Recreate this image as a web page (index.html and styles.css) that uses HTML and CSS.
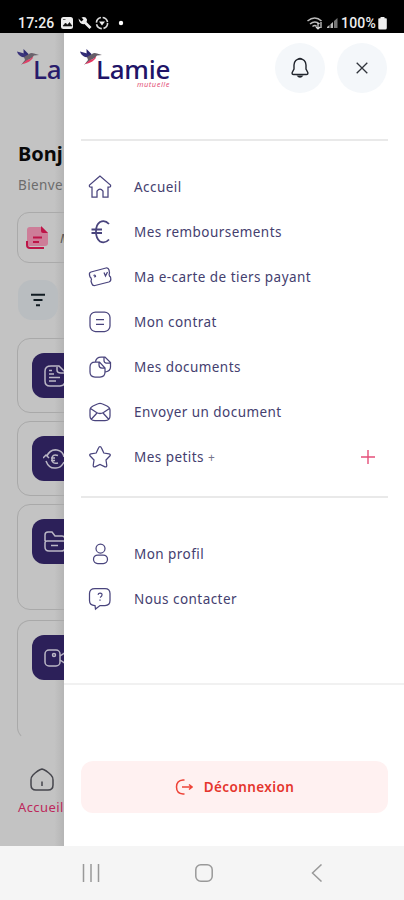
FILE: index.html
```html
<!DOCTYPE html>
<html lang="fr">
<head>
<meta charset="utf-8">
<title>Lamie mutuelle</title>
<link rel="stylesheet" href="styles.css">
</head>
<body>
<svg class="defs" width="0" height="0">
  <symbol id="bird" viewBox="0 0 22 17">
    <path d="M6.500 0L11.500 5L11 9L8 8Q6 5 6.500 0Z" fill="#29246f"/>
    <path d="M0 2.500L9 5L12 9L5 8Q1 6 0 2.500Z" fill="#332d77"/>
    <path d="M7 8L12 5Q14 3.500 17 4.500L22 6L17 6.500Q15 10 11 11L4 16L8 11Z" fill="#655d67"/>
    <path d="M16 7.500Q14 10 10 11L5 15Q11 14 14 11Q16 9.500 16 7.500Z" fill="#e43862"/>
  </symbol>
</svg>
<header class="status">
  <span class="time">17:26</span>
  <svg class="status-left" width="64" height="16" viewBox="0 0 64 16">
    <rect x="1" y="2" width="12" height="12" rx="2.500" fill="#eee"/><path d="M3 11l2.500-3 2 2 2-2.500 2.500 3.500zM3 4.500h2.500" fill="#111" stroke="#111" stroke-width=".6"/>
    <path d="M18.500 3.500l3 3 2-2-2-2q4-1.500 5.500 2 0 1.500-.5 2.500l5 5-2 2-5-5q-5 1-6-5.500z" fill="#eee"/>
    <circle cx="42" cy="8" r="5.600" fill="none" stroke="#ddd" stroke-width="1.600" stroke-dasharray="7 1.800"/><path d="M39 6.500h6L42 10.500z" fill="#eee"/>
    <circle cx="61" cy="8" r="2.200" fill="#fff"/>
  </svg>
  <svg class="status-right" width="34" height="14" viewBox="0 0 34 14">
    <path d="M1.500 5q7.500-6 14 0M4 8q5-4 9.500 0M6.500 10.500q2.500-2 4 0" fill="none" stroke="#bbb" stroke-width="1.600"/><path d="M12 13V7m-2 4l2 2 2-2M15 6v6" fill="none" stroke="#ddd" stroke-width="1.200"/>
    <path d="M21 12h2.500V9L21 11zM24.500 12H27V6l-2.500 2.300z" fill="#bbb"/><path d="M28 12h3.500V2L28 5z" fill="#777"/>
  </svg>
  <span class="level">100%</span>
  <svg width="9" height="13" viewBox="0 0 9 13"><path d="M2.500 0h4v1.200H8q.8 0 .8 1V11q0 1.500-1.500 1.500h-5.500Q.3 12.500.3 11V2.200q0-1 .8-1h1.400z" fill="#eee"/></svg>
</header>
<div class="stage">
  <section class="home">
    <div class="logo logo-dim"><svg class="bird" width="22" height="17"><use href="#bird"/></svg><span class="word">La</span></div>
    <h1>Bonj</h1>
    <p class="welcome">Bienve</p>
    <div class="search">
      <svg width="24" height="24" viewBox="0 0 24 24"><path d="M5 1h12l6 6v10q0 3-3 3H5q-3 0-3-3V4q0-3 3-3z" fill="#cd7d98"/><path d="M16 0l7 7h-5q-2 0-2-2z" fill="#bd1548"/><path d="M2 15v4q0 3 3 3h14" fill="none" stroke="#bd1548" stroke-width="2"/><path d="M8 11.500h9M8 16h6" stroke="#bd1548" stroke-width="2"/></svg>
      <em>M</em>
    </div>
    <div class="filter"><svg width="16" height="14" viewBox="0 0 16 14"><path d="M1 1.800h14M3.500 7h9M6 12.200h4" stroke="#111b22" stroke-width="2"/></svg></div>
    <div class="card"><div class="tile"><svg width="24" height="24" viewBox="0 0 24 24"><path d="M8 2h8l6 6v9q0 5-5 5H7q-5 0-5-5V7q0-5 6-5z"/><path d="M14 3v3q0 3 4 3h3M6 10h5M6 13.500h11M6 17h7M6 6.500h3"/></svg></div></div>
    <div class="card"><div class="tile"><svg width="24" height="24" viewBox="0 0 24 24"><path d="M4 9Q7 2 14 3q6 1 7 7M3 14q3 8 10 7 5 0 8-6M0 11l3-3 3 3M15 8.500q-6-2-6 3.500t6 4M8 11h4M8 13.500h4"/></svg></div></div>
    <div class="card tall"><div class="tile"><svg width="24" height="24" viewBox="0 0 24 24"><path d="M2 11V5q0-3 3-3h4l3 4h7q3 0 3 4v1M4 11h17q2 0 1 3v4q0 3-4 3H6q-4 0-4-4v-4q0-2 2-2zM8 15.500h7"/></svg></div></div>
    <div class="card last"><div class="tile"><svg width="24" height="24" viewBox="0 0 24 24"><rect x="2" y="4" width="15" height="16" rx="4"/><path d="M17 10l6-4v12l-6-4"/><circle cx="11" cy="9" r="1.500"/></svg></div></div>
    <div class="tab">
      <svg width="24" height="23" viewBox="0 0 24 23"><path d="M12 1Q8 2 3 7 1 9 1 12v5q0 5 5 5h12q5 0 5-5v-5q0-3-2-5Q16 2 12 1zM12 13.500v4.500" fill="none" stroke="#45454c" stroke-width="1.500"/></svg>
      <span>Accueil</span>
    </div>
  </section>
  <aside class="drawer">
    <div class="top">
      <div class="logo"><svg class="bird" width="22" height="17"><use href="#bird"/></svg><span class="word">Lamie</span><span class="sub">mutuelle</span></div>
      <button class="round" aria-label="Notifications"><svg width="20" height="22" viewBox="0 0 20 22"><path d="M10 2q5.500 0 6 6v4l1.800 3.500q.5 2-1.500 2H3.700q-2 0-1.500-2L4 12V8q.5-6 6-6z" fill="none" stroke="#20242c" stroke-width="1.400"/><path d="M7.500 2Q10-.5 12.500 2zM6.500 18.500q3.500 4.500 7 0z" fill="#20242c"/></svg></button>
      <button class="round" aria-label="Fermer"><svg width="12" height="12" viewBox="0 0 12 12"><path d="M.7.7l10.600 10.600M11.300.7L.7 11.300" stroke="#30343b" stroke-width="1.300"/></svg></button>
    </div>
    <nav class="menu">
      <a><svg viewBox="0 0 24 24"><path d="M12 1L1.500 10q-.7 2 1.500 2h1v10h5v-6q3-4 6 0v6h5V12h1q2.200 0 1.500-2z"/></svg><span>Accueil</span></a>
      <a><svg viewBox="0 0 24 24"><path d="M21 4Q17-.5 12 2 8 4.500 8 11.500T12 21.500Q17 24 21 19.500M3.500 9.500H14M3.500 13H14" stroke-width="1.800"/></svg><span>Mes remboursements</span></a>
      <a><svg viewBox="0 0 24 24"><path d="M3 7L18 3q2.300-.5 3 2l.5 3q-.8 1.500 0 3l1 1 .3 2q.2 2.300-2 3L7 20.500q-2.500.5-3.200-2L3 16q1-1.500 0-3L2 12l-.5-2Q1 7.500 3 7zM16 7.500l1.500 3.500 2-4M5.500 10.500q2-1 2 1l-1.500.5"/></svg><span>Ma e-carte de tiers payant</span></a>
      <a><svg viewBox="0 0 24 24"><rect x="2" y="2" width="20" height="19.500" rx="5.500"/><path d="M8 9.700h8M8 14.300h8"/></svg><span>Mon contrat</span></a>
      <a><svg viewBox="0 0 24 24"><path d="M7 7h4.500l5.500 6v4q0 5-5 5H7q-5 0-5-5v-5Q2 7 7 7zM11 7v3q0 3 3 3h3M7.500 6.500Q8.500 2 13 2h4l5.500 5.500V12q0 4-5 5M16 2v3.500q0 2.500 2.500 2.500h4"/></svg><span>Mes documents</span></a>
      <a><svg viewBox="0 0 24 24"><path d="M2 10Q2 7.500 5 6l5-2.200q2-1 4 0L19 6q3 1.500 3 4v6q0 4.500-5 4.500H7q-5 0-5-4.500zM2.500 8.500l6 4q3.500 2 7 0l6-4M3.500 19L9 13M20.500 19L15 13"/></svg><span>Envoyer un document</span></a>
      <a><svg viewBox="0 0 24 24"><path d="M12 1.700q1 0 1.500 1.200L15.800 8l5.300.8q2 .5.700 2.200L18 15l.8 5.500q0 2-1.800 1.300L12 19.500l-5 2.300q-1.800.7-1.800-1.300L6 15l-3.800-4Q.9 9.300 2.900 8.800L8.200 8l2.300-5.100Q11 1.700 12 1.700z"/></svg><span>Mes petits <small>+</small></span><svg class="plus" viewBox="0 0 14 14"><path d="M7 0v14M0 7h14"/></svg></a>
    </nav>
    <nav class="menu second">
      <a><svg viewBox="0 0 24 24"><circle cx="12.500" cy="6.500" r="4.500"/><rect x="5.500" y="13" width="14" height="8.500" rx="4.200"/></svg><span>Mon profil</span></a>
      <a><svg viewBox="0 0 24 24"><path d="M7 1.500h10q5 0 5 5v7q0 5-5 5h-5L7.500 22 7 18.500q-5.500 0-5.500-5v-7q0-5 5.500-5zM10 7.700q.5-1.700 2.200-1.600 2 .2 1.800 2 0 1.200-2 2.400M12 12.500v1.300"/></svg><span>Nous contacter</span></a>
    </nav>
    <div class="foot">
      <button class="logout"><svg width="18" height="18" viewBox="0 0 18 18"><path d="M9.500 2H8Q1.500 2.500 1.500 9T8 16h1.500M7 9h10M14 6.500L17 9l-3 2.500" fill="none" stroke="#ee4438" stroke-width="1.500"/></svg><span>Déconnexion</span></button>
    </div>
  </aside>
</div>
<footer class="sysnav">
  <svg width="18" height="18" viewBox="0 0 18 18"><path d="M1.500 0v18M9 0v18M16.500 0v18"/></svg>
  <svg width="18" height="18" viewBox="0 0 18 18"><rect x=".8" y=".8" width="16.400" height="16.400" rx="5"/></svg>
  <svg width="18" height="18" viewBox="0 0 18 18"><path d="M13.500.5L4.500 9l9 8.500"/></svg>
</footer>
</body>
</html>
```

FILE: styles.css
```css
* { box-sizing: border-box; }
body {
  margin: 0;
  width: 404px;
  height: 900px;
  display: flex;
  flex-direction: column;
  overflow: hidden;
  font-family: "Noto Sans", sans-serif;
  background: #fff;
}
svg { display: block; flex: none; }
.defs { position: absolute; }
button { border: 0; padding: 0; font: inherit; }

.status {
  height: 33px;
  flex: none;
  display: flex;
  align-items: center;
  padding: 13px 17px 0 18px;
  background: #000;
  color: #eee;
  font: 500 14px/18px Roboto, sans-serif;
}
.time { width: 42px; letter-spacing: .2px; }
.status-right { margin-left: auto; }
.level { margin-left: 1px; width: 37px; letter-spacing: .2px; }

.stage { height: 813px; flex: none; display: flex; }
.home {
  width: 64px;
  flex: none;
  overflow: hidden;
  padding: 15px 0 0 17px;
  background: linear-gradient(90deg, #c3c3c3 85%, #b5b5b5);
}
.logo { position: relative; width: 92px; height: 40px; flex: none; }
.bird { position: absolute; left: 0; top: 1px; }
.word {
  position: absolute;
  left: 16px;
  top: 9px;
  font: 500 26px/24px "Noto Sans", sans-serif;
  letter-spacing: -.2px;
  color: #201367;
}
.sub {
  position: absolute;
  right: 2px;
  top: 33px;
  font: italic 7.500px/7px "Noto Sans", sans-serif;
  color: #e4557b;
  letter-spacing: .5px;
}
.logo-dim { opacity: .95; }
h1 { margin: 51px 0 0 1px; font-size: 20px; line-height: 29px; font-weight: 700; color: #090909; }
.welcome { margin: 7px 0 0 1px; font-size: 13.500px; line-height: 20px; letter-spacing: .4px; color: #6c6c6c; }
.search {
  width: 120px;
  height: 51px;
  margin-top: 17px;
  display: flex;
  align-items: center;
  gap: 11px;
  padding-left: 7px;
  border: 1px solid #aaa;
  border-radius: 12px;
}
.search em { font-size: 13px; color: #555; }
.filter {
  width: 40px;
  height: 40px;
  margin: 17px 0 18px 1px;
  border-radius: 14px;
  background: #b9bdc0;
  display: grid;
  place-items: center;
}
.card {
  width: 120px;
  height: 75px;
  margin-bottom: 8px;
  padding: 14px;
  border: 1px solid #a9a9a9;
  border-radius: 13px;
}
.card.tall { height: 106px; margin-bottom: 10px; }
.card.last { height: 120px; border-bottom-color: transparent; margin-bottom: 28px; }
.tile {
  width: 45px;
  height: 45px;
  border-radius: 12px;
  background: #2c2059;
  display: flex;
  align-items: center;
  padding-left: 11px;
}
.tile svg { fill: none; stroke: #bbb7c5; stroke-width: 1.500; }
.tab { display: flex; flex-direction: column; gap: 6px; padding-left: 1px; }
.tab svg { margin-left: 12px; }
.tab span { font-size: 13px; line-height: 20px; color: #bd285b; letter-spacing: .4px; }

.drawer { width: 340px; flex: none; background: #fff; }
.top {
  height: 108px;
  margin: 0 16px 0 17px;
  padding: 10px 1px 0 0;
  display: flex;
  gap: 12px;
  border-bottom: 2px solid #e9e9e9;
}
.top .logo { margin: 5px auto 0 -1px; }
.round {
  width: 50px;
  height: 50px;
  border-radius: 50%;
  background: #f4f7fa;
  display: grid;
  place-items: center;
}
.menu {
  margin: 0 16px 0 17px;
  padding: 23px 13px 17px 7px;
  border-bottom: 2px solid #e9e9e9;
}
.menu a {
  height: 45px;
  display: flex;
  align-items: center;
  gap: 22px;
  font-size: 13.500px;
  letter-spacing: .45px;
  color: #44406f;
}
.menu svg {
  width: 24px;
  height: 24px;
  fill: none;
  stroke: #49447d;
  stroke-width: 1.250;
}
.menu .plus { width: 14px; height: 14px; margin-left: auto; stroke: #e54f79; stroke-width: 1.400; }
.menu small { font-size: 12px; color: #77758b; }
.menu.second { margin: 0; padding: 33px 31px 62px 24px; border-color: #f1f1f1; }
.foot { padding: 76px 16px 0 17px; }
.logout {
  width: 100%;
  height: 52px;
  border-radius: 12px;
  background: #fff1f1;
  display: flex;
  align-items: center;
  justify-content: center;
  gap: 11px;
  color: #e5352d;
  font-size: 13.500px;
  font-weight: 600;
  letter-spacing: .4px;
}

.sysnav {
  height: 54px;
  flex: none;
  display: flex;
  justify-content: space-between;
  align-items: center;
  padding: 0 78px 0 82px;
  background: #f5f5f5;
}
.sysnav svg { fill: none; stroke: #999; stroke-width: 1.500; }
```
